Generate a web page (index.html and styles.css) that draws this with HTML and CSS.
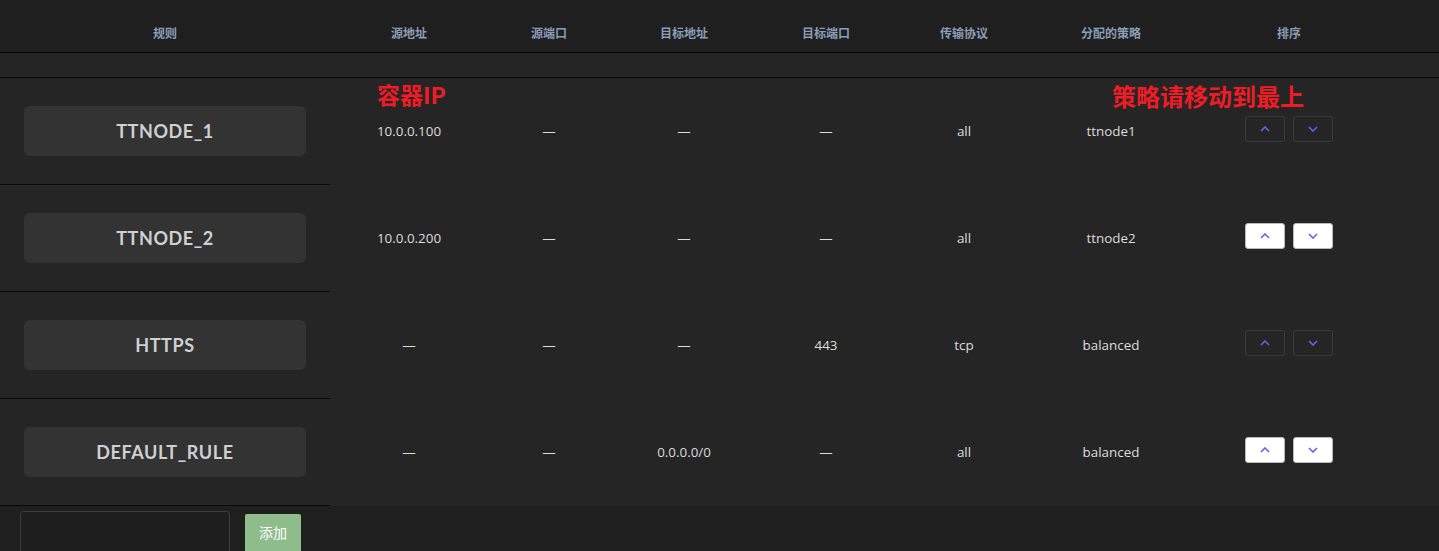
FILE: index.html
```html
<!DOCTYPE html>
<html lang="zh">
<head>
<meta charset="utf-8">
<link rel="stylesheet" href="styles.css">
</head>
<body>
<div class="page">
  <div class="table">
    <div class="row head">
      <div class="th">规则</div>
      <div class="th">源地址</div>
      <div class="th">源端口</div>
      <div class="th">目标地址</div>
      <div class="th">目标端口</div>
      <div class="th">传输协议</div>
      <div class="th">分配的策略</div>
      <div class="th">排序</div>
      <div class="th"></div>
    </div>
    <div class="spacer"></div>

    <div class="row body">
      <div class="td name"><span class="pill">TTNODE_1</span></div>
      <div class="td">10.0.0.100</div>
      <div class="td">—</div>
      <div class="td">—</div>
      <div class="td">—</div>
      <div class="td">all</div>
      <div class="td">ttnode1</div>
      <div class="td sort">
        <button class="sbtn"><svg viewBox="0 0 10 6" width="10" height="6"><path d="M1 5 L5 1 L9 5" /></svg></button>
        <button class="sbtn"><svg viewBox="0 0 10 6" width="10" height="6"><path d="M1 1 L5 5 L9 1" /></svg></button>
      </div>
      <div class="td"></div>
    </div>

    <div class="row body">
      <div class="td name"><span class="pill">TTNODE_2</span></div>
      <div class="td">10.0.0.200</div>
      <div class="td">—</div>
      <div class="td">—</div>
      <div class="td">—</div>
      <div class="td">all</div>
      <div class="td">ttnode2</div>
      <div class="td sort">
        <button class="sbtn light"><svg viewBox="0 0 10 6" width="10" height="6"><path d="M1 5 L5 1 L9 5" /></svg></button>
        <button class="sbtn light"><svg viewBox="0 0 10 6" width="10" height="6"><path d="M1 1 L5 5 L9 1" /></svg></button>
      </div>
      <div class="td"></div>
    </div>

    <div class="row body">
      <div class="td name"><span class="pill">HTTPS</span></div>
      <div class="td">—</div>
      <div class="td">—</div>
      <div class="td">—</div>
      <div class="td">443</div>
      <div class="td">tcp</div>
      <div class="td">balanced</div>
      <div class="td sort">
        <button class="sbtn"><svg viewBox="0 0 10 6" width="10" height="6"><path d="M1 5 L5 1 L9 5" /></svg></button>
        <button class="sbtn"><svg viewBox="0 0 10 6" width="10" height="6"><path d="M1 1 L5 5 L9 1" /></svg></button>
      </div>
      <div class="td"></div>
    </div>

    <div class="row body">
      <div class="td name"><span class="pill">DEFAULT_RULE</span></div>
      <div class="td">—</div>
      <div class="td">—</div>
      <div class="td">0.0.0.0/0</div>
      <div class="td">—</div>
      <div class="td">all</div>
      <div class="td">balanced</div>
      <div class="td sort">
        <button class="sbtn light"><svg viewBox="0 0 10 6" width="10" height="6"><path d="M1 5 L5 1 L9 5" /></svg></button>
        <button class="sbtn light"><svg viewBox="0 0 10 6" width="10" height="6"><path d="M1 1 L5 5 L9 1" /></svg></button>
      </div>
      <div class="td"></div>
    </div>

    <div class="note note-ip">容器IP</div>
    <div class="note note-policy">策略请移动到最上</div>
  </div>

  <div class="footer">
    <input class="add-input" type="text">
    <button class="add-btn">添加</button>
  </div>
</div>
</body>
</html>
```

FILE: styles.css
```css
* { box-sizing: border-box; }
html, body {
  margin: 0;
  padding: 0;
  background: #1f1f1f;
  height: 551px;
  overflow: hidden;
  font-family: "Open Sans", "Noto Sans CJK SC", sans-serif;
}
.page { width: 1439px; }
.table {
  position: relative;
  background: #252525;
}
.row {
  display: grid;
  grid-template-columns: 330px 158px 122px 148px 136px 140px 154px 202px 1fr;
}
.head {
  background: #1f1f1f;
  height: 53px;
  border-bottom: 1px solid #050505;
}
.th {
  display: flex;
  align-items: center;
  justify-content: center;
  padding-top: 14px;
  font-size: 12px;
  font-weight: 700;
  color: #8a9db5;
}
.spacer {
  height: 25px;
  background: #252525;
  border-bottom: 1px solid #050505;
}
.body { height: 107px; }
.td {
  display: flex;
  align-items: center;
  justify-content: center;
  font-size: 13.4px;
  color: #dcdcdc;
  padding-bottom: 2px;
}
.td.name {
  border-bottom: 1px solid #0a0a0a;
  padding: 0 24px 0 24px;
  justify-content: flex-start;
}
.pill {
  display: flex;
  align-items: center;
  justify-content: center;
  width: 282px;
  height: 50px;
  background: #333333;
  border-radius: 6px;
  font-family: "Lato", "Open Sans", sans-serif;
  font-weight: 700;
  font-size: 18px;
  letter-spacing: 0.6px;
  color: #cfd0d2;
}
.sort {
  gap: 8px;
  padding-bottom: 6px;
}
.sbtn {
  width: 40px;
  height: 26px;
  border: 1px solid #3a3a3a;
  border-radius: 3px;
  background: transparent;
  display: flex;
  align-items: center;
  justify-content: center;
  padding: 0;
}
.sbtn.light {
  background: #ffffff;
  border-color: #bbbbbb;
}
.sbtn svg path {
  fill: none;
  stroke: #5468f0;
  stroke-width: 1.6;
}
.note {
  position: absolute;
  color: #ee1c25;
  font-weight: 700;
  font-size: 23px;
  line-height: 1;
  font-family: "Noto Sans CJK SC", sans-serif;
}
.note-ip { left: 377px; top: 83px; }
.note-policy { left: 1112px; top: 84px; font-size: 24px; }
.footer {
  display: flex;
  align-items: flex-start;
  gap: 15px;
  padding: 5px 0 0 20px;
  height: 45px;
  background: #1f1f1f;
}
.add-input {
  width: 210px;
  height: 46px;
  border: 1px solid #3c3c3c;
  border-radius: 3px;
  background: #1e1e1e;
  outline: none;
}
.add-btn {
  margin-top: 3px;
  width: 56px;
  height: 44px;
  border: none;
  border-radius: 2px;
  background: #8fbc8b;
  color: #ffffff;
  font-size: 14px;
  font-family: "Noto Sans CJK SC", sans-serif;
  padding: 0 0 8px 0;
}
```
